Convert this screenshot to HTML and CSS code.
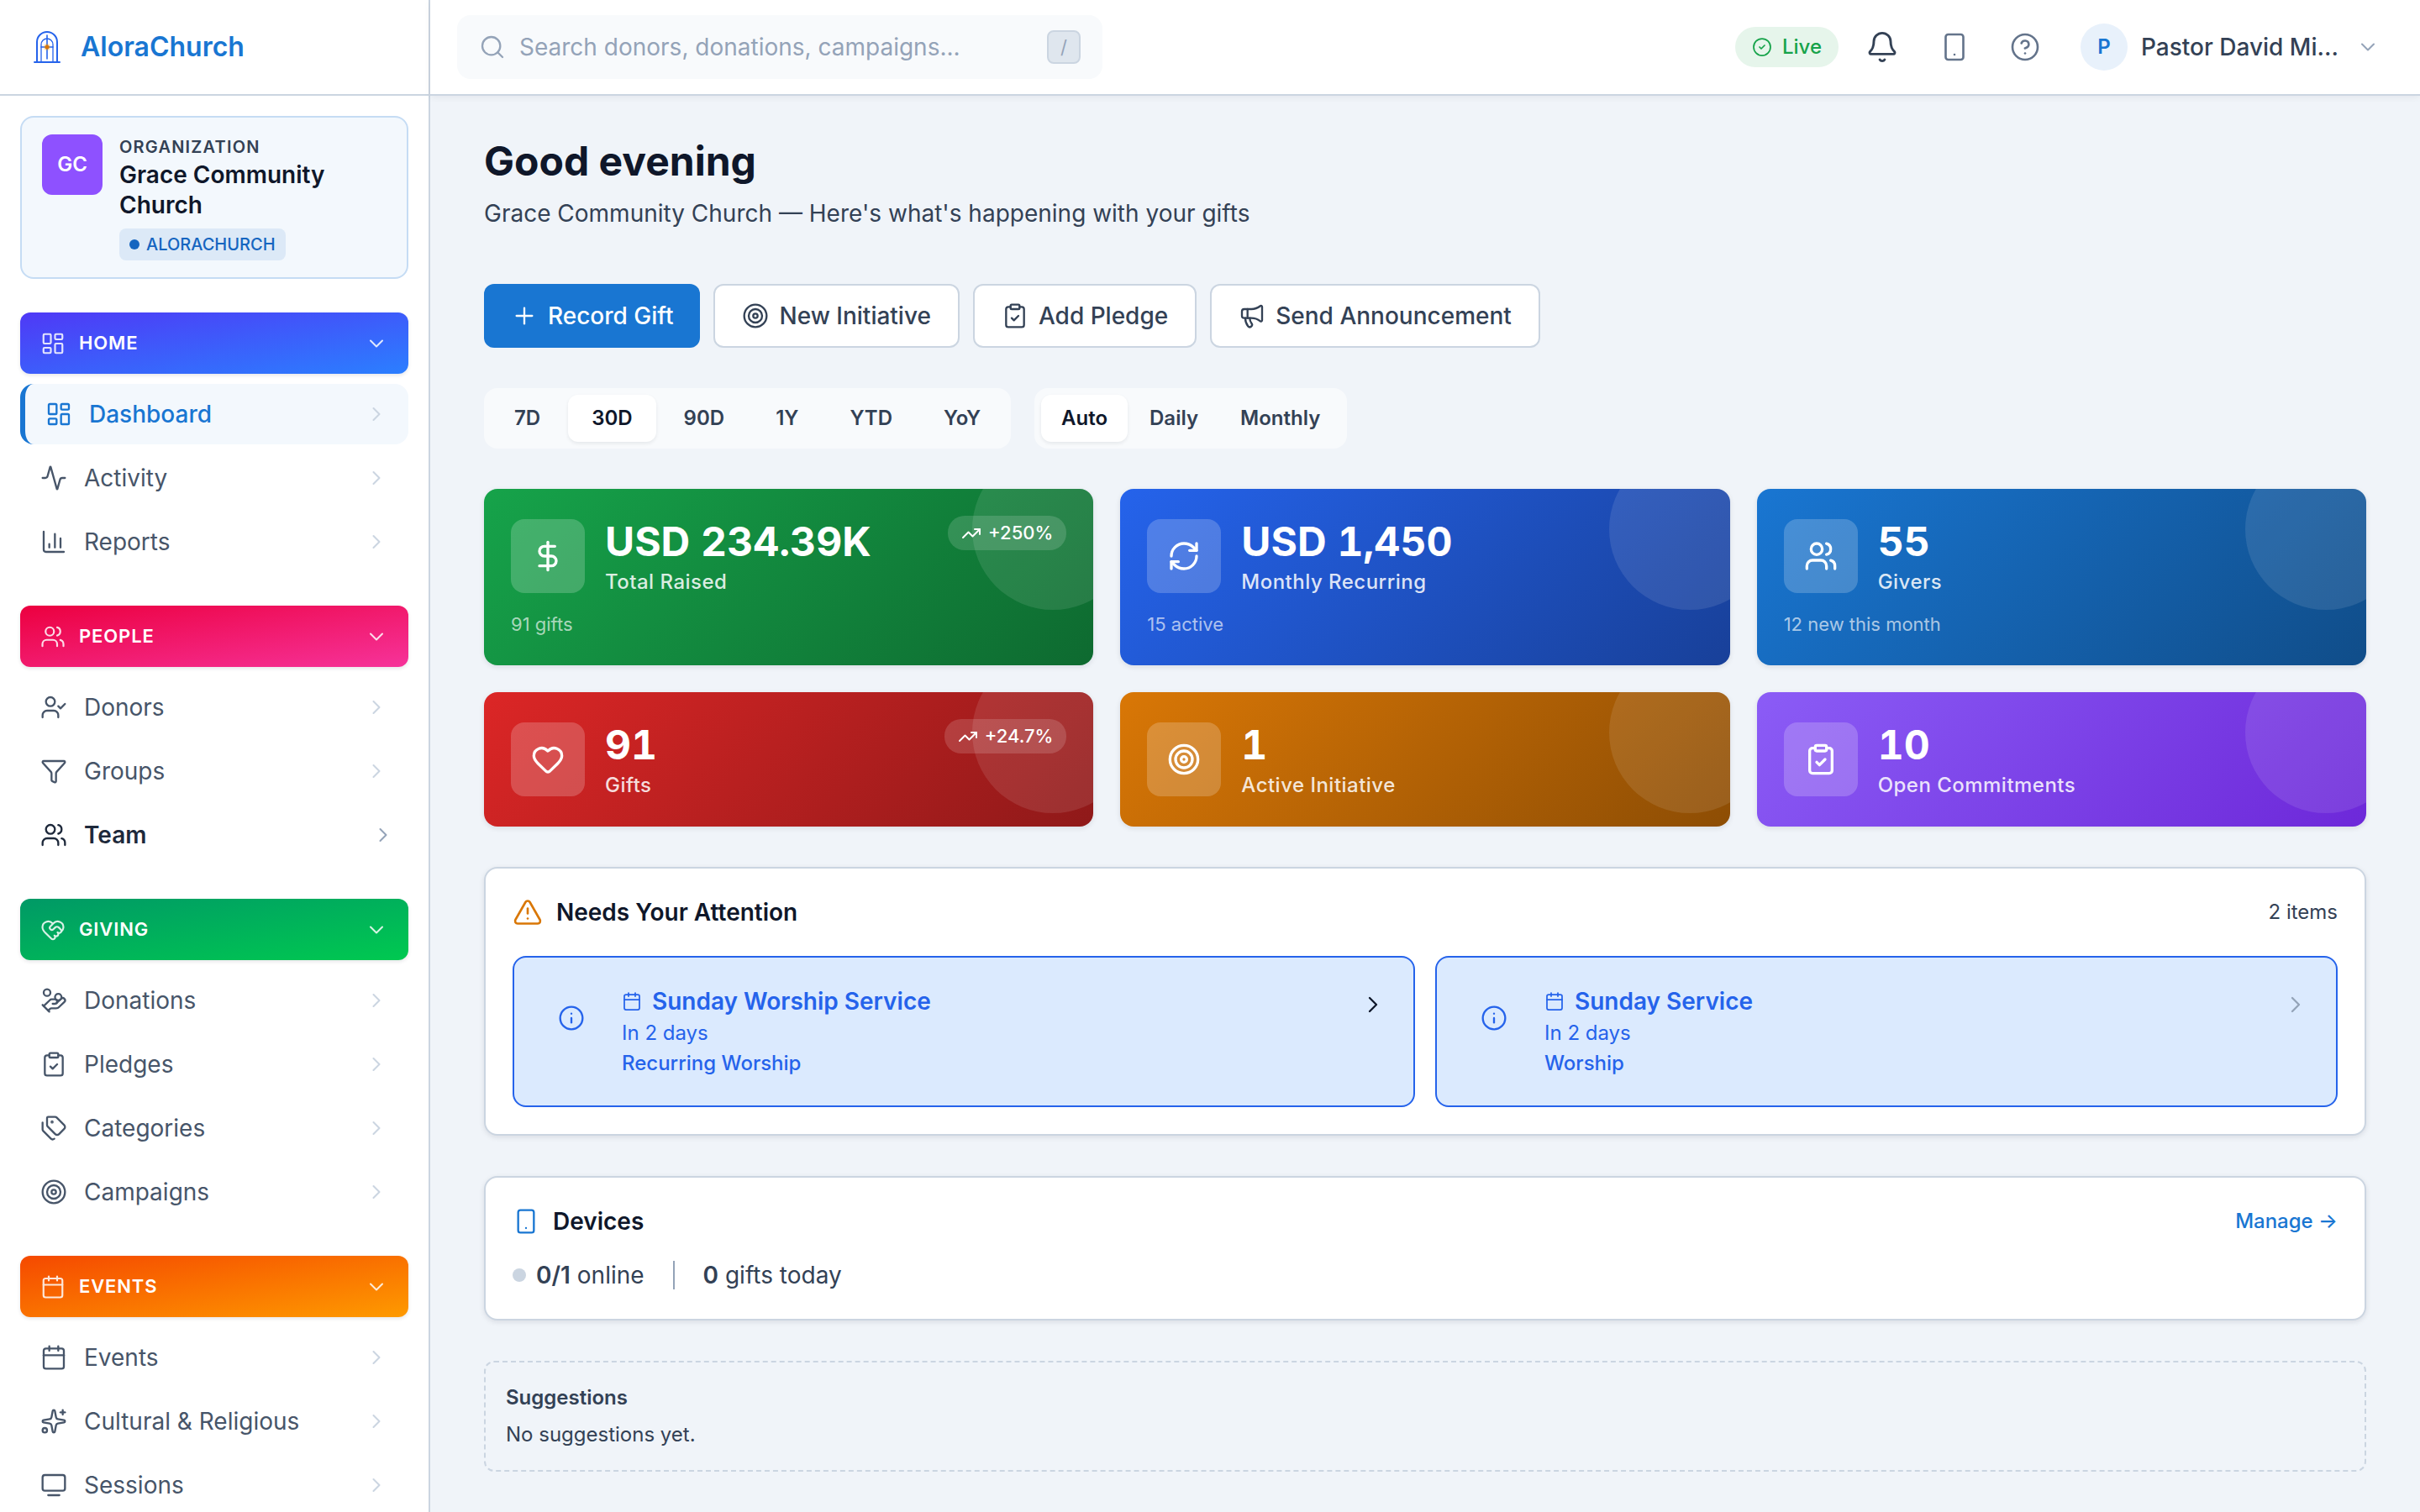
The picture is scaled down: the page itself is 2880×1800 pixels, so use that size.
FILE: index.html
```html
<!DOCTYPE html>
<html lang="en">
<head>
    <meta charset="UTF-8">
    <meta name="viewport" content="width=device-width, initial-scale=1.0">
    <title>AloraChurch</title>
    <link rel="stylesheet" href="styles.css">
</head>

<body>
<!-- icon sprite -->
<svg class="sprite" aria-hidden="true">
    <symbol id="i-dashboard" viewBox="0 0 24 24"><rect width="7" height="9" x="3" y="3" rx="1"/><rect width="7" height="5" x="14" y="3" rx="1"/><rect width="7" height="9" x="14" y="12" rx="1"/><rect width="7" height="5" x="3" y="16" rx="1"/></symbol>
    <symbol id="i-activity" viewBox="0 0 24 24"><path d="M22 12h-2.48a2 2 0 0 0-1.93 1.46l-2.35 8.36a.25.25 0 0 1-.48 0L9.24 2.18a.25.25 0 0 0-.48 0l-2.35 8.36A2 2 0 0 1 4.49 12H2"/></symbol>
    <symbol id="i-chart" viewBox="0 0 24 24"><path d="M3 3v16a2 2 0 0 0 2 2h16"/><path d="M18 17V9"/><path d="M13 17V5"/><path d="M8 17v-3"/></symbol>
    <symbol id="i-users" viewBox="0 0 24 24"><path d="M16 21v-2a4 4 0 0 0-4-4H6a4 4 0 0 0-4 4v2"/><path d="M16 3.128a4 4 0 0 1 0 7.744"/><path d="M22 21v-2a4 4 0 0 0-3-3.87"/><circle cx="9" cy="7" r="4"/></symbol>
    <symbol id="i-user-check" viewBox="0 0 24 24"><path d="m16 11 2 2 4-4"/><path d="M16 21v-2a4 4 0 0 0-4-4H6a4 4 0 0 0-4 4v2"/><circle cx="9" cy="7" r="4"/></symbol>
    <symbol id="i-funnel" viewBox="0 0 24 24"><path d="M10 20a1 1 0 0 0 .553.895l2 1A1 1 0 0 0 14 21v-7a2 2 0 0 1 .517-1.341L21.74 4.67A1 1 0 0 0 21 3H3a1 1 0 0 0-.742 1.67l7.225 7.989A2 2 0 0 1 10 14z"/></symbol>
    <symbol id="i-handshake" viewBox="0 0 24 24"><path d="M19.414 14.414C21 12.828 22 11.5 22 9.5a5.5 5.5 0 0 0-9.591-3.676.6.6 0 0 1-.818.001A5.5 5.5 0 0 0 2 9.5c0 2.3 1.5 4 3 5.5l5.535 5.362a2 2 0 0 0 2.879.052 2.12 2.12 0 0 0-.004-3 2.124 2.124 0 1 0 3-3 2.124 2.124 0 0 0 3.004 0 2 2 0 0 0 0-2.828l-1.881-1.882a2.41 2.41 0 0 0-3.409 0l-1.71 1.71a2 2 0 0 1-2.828 0 2 2 0 0 1 0-2.828l2.823-2.762"/></symbol>
    <symbol id="i-coins" viewBox="0 0 24 24"><path d="M11 15h2a2 2 0 1 0 0-4h-3c-.6 0-1.1.2-1.4.6L3 17"/><path d="m7 21 1.6-1.4c.3-.4.8-.6 1.4-.6h4c1.1 0 2.1-.4 2.8-1.2l4.6-4.4a2 2 0 0 0-2.75-2.91l-4.2 3.9"/><path d="m2 16 6 6"/><circle cx="16" cy="9" r="2.9"/><circle cx="6" cy="5" r="3"/></symbol>
    <symbol id="i-clipboard" viewBox="0 0 24 24"><rect width="8" height="4" x="8" y="2" rx="1"/><path d="M16 4h2a2 2 0 0 1 2 2v14a2 2 0 0 1-2 2H6a2 2 0 0 1-2-2V6a2 2 0 0 1 2-2h2"/><path d="m9 14 2 2 4-4"/></symbol>
    <symbol id="i-tags" viewBox="0 0 24 24"><path d="M13.172 2a2 2 0 0 1 1.414.586l6.71 6.71a2.4 2.4 0 0 1 0 3.408l-4.592 4.592a2.4 2.4 0 0 1-3.408 0l-6.71-6.71A2 2 0 0 1 6 9.172V3a1 1 0 0 1 1-1z"/><path d="M2 7v6.172a2 2 0 0 0 .586 1.414l6.71 6.71a2.4 2.4 0 0 0 3.191.193"/><circle cx="10.5" cy="6.5" r=".5" fill="currentColor"/></symbol>
    <symbol id="i-target" viewBox="0 0 24 24"><circle cx="12" cy="12" r="10"/><circle cx="12" cy="12" r="6"/><circle cx="12" cy="12" r="2"/></symbol>
    <symbol id="i-calendar" viewBox="0 0 24 24"><path d="M8 2v4"/><path d="M16 2v4"/><rect width="18" height="18" x="3" y="4" rx="2"/><path d="M3 10h18"/></symbol>
    <symbol id="i-sparkles" viewBox="0 0 24 24"><path d="M11.017 2.814a1 1 0 0 1 1.966 0l1.051 5.558a2 2 0 0 0 1.594 1.594l5.558 1.051a1 1 0 0 1 0 1.966l-5.558 1.051a2 2 0 0 0-1.594 1.594l-1.051 5.558a1 1 0 0 1-1.966 0l-1.051-5.558a2 2 0 0 0-1.594-1.594l-5.558-1.051a1 1 0 0 1 0-1.966l5.558-1.051a2 2 0 0 0 1.594-1.594z"/><path d="M20 2v4"/><path d="M22 4h-4"/><circle cx="4" cy="20" r="2"/></symbol>
    <symbol id="i-screen" viewBox="0 0 24 24"><path d="M7 21h10"/><rect width="20" height="14" x="2" y="3" rx="2"/></symbol>
    <symbol id="i-down" viewBox="0 0 24 24"><path d="m6 9 6 6 6-6"/></symbol>
    <symbol id="i-right" viewBox="0 0 24 24"><path d="m9 18 6-6-6-6"/></symbol>
    <symbol id="i-search" viewBox="0 0 24 24"><path d="m21 21-4.34-4.34"/><circle cx="11" cy="11" r="8"/></symbol>
    <symbol id="i-check" viewBox="0 0 24 24"><circle cx="12" cy="12" r="10"/><path d="m9 12 2 2 4-4"/></symbol>
    <symbol id="i-bell" viewBox="0 0 24 24"><path d="M10.268 21a2 2 0 0 0 3.464 0"/><path d="M3.262 15.326A1 1 0 0 0 4 17h16a1 1 0 0 0 .74-1.673C19.41 13.956 18 12.499 18 8A6 6 0 0 0 6 8c0 4.499-1.411 5.956-2.738 7.326"/></symbol>
    <symbol id="i-phone" viewBox="0 0 24 24"><rect width="14" height="20" x="5" y="2" rx="2"/><path d="M12 18h.01"/></symbol>
    <symbol id="i-help" viewBox="0 0 24 24"><circle cx="12" cy="12" r="10"/><path d="M9.09 9a3 3 0 0 1 5.83 1c0 2-3 3-3 3"/><path d="M12 17h.01"/></symbol>
    <symbol id="i-plus" viewBox="0 0 24 24"><path d="M5 12h14"/><path d="M12 5v14"/></symbol>
    <symbol id="i-megaphone" viewBox="0 0 24 24"><path d="M11 6a13 13 0 0 0 8.4-2.8A1 1 0 0 1 21 4v12a1 1 0 0 1-1.6.8A13 13 0 0 0 11 14H5a2 2 0 0 1-2-2V8a2 2 0 0 1 2-2z"/><path d="M6 14a12 12 0 0 0 2.4 7.2 2 2 0 0 0 3.2-2.4A8 8 0 0 1 10 14"/><path d="M8 6v8"/></symbol>
    <symbol id="i-dollar" viewBox="0 0 24 24"><path d="M12 2v20"/><path d="M17 5H9.5a3.5 3.5 0 0 0 0 7h5a3.5 3.5 0 0 1 0 7H6"/></symbol>
    <symbol id="i-refresh" viewBox="0 0 24 24"><path d="M3 12a9 9 0 0 1 9-9 9.75 9.75 0 0 1 6.74 2.74L21 8"/><path d="M21 3v5h-5"/><path d="M21 12a9 9 0 0 1-9 9 9.75 9.75 0 0 1-6.74-2.74L3 16"/><path d="M8 16H3v5"/></symbol>
    <symbol id="i-heart" viewBox="0 0 24 24"><path d="M2 9.5a5.5 5.5 0 0 1 9.591-3.676.56.56 0 0 0 .818 0A5.49 5.49 0 0 1 22 9.5c0 2.29-1.5 4-3 5.5l-5.492 5.313a2 2 0 0 1-3 .019L5 15c-1.5-1.5-3-3.2-3-5.5"/></symbol>
    <symbol id="i-trend" viewBox="0 0 24 24"><path d="M16 7h6v6"/><path d="m22 7-8.5 8.5-5-5L2 17"/></symbol>
    <symbol id="i-alert" viewBox="0 0 24 24"><path d="m21.73 18-8-14a2 2 0 0 0-3.48 0l-8 14A2 2 0 0 0 4 21h16a2 2 0 0 0 1.73-3"/><path d="M12 9v4"/><path d="M12 17h.01"/></symbol>
    <symbol id="i-info" viewBox="0 0 24 24"><circle cx="12" cy="12" r="10"/><path d="M12 16v-4"/><path d="M12 8h.01"/></symbol>
</svg>

<aside class="sidebar">
    <a class="brand" href="#">
        <svg class="brand-logo" viewBox="0 0 40 40" aria-hidden="true">
            <path d="M8 38V14a12 12 0 0 1 24 0v24" stroke-width="2"/>
            <path d="M13 38V17a7 7 0 0 1 14 0v21" stroke-width="1.3"/>
            <path d="M20 6v28M13 20h14" stroke-width="1.6"/>
            <path d="M5 38h30" stroke-width="2"/>
            <circle class="brand-glow" cx="20" cy="20" r="4"/>
            <circle class="brand-spark" cx="20" cy="20" r="2.5"/>
        </svg>
        <span>AloraChurch</span>
    </a>

    <div class="sidebar-body">
        <div class="org">
            <div class="org-avatar">GC</div>
            <div class="org-info">
                <div class="org-label">ORGANIZATION</div>
                <div class="org-name">Grace Community Church</div>
                <span class="org-badge"><i class="dot"></i>ALORACHURCH</span>
            </div>
        </div>

        <nav class="nav">
            <section class="nav-section">
                <button class="nav-head home" type="button"><svg class="icon"><use href="#i-dashboard"/></svg><span>HOME</span><svg class="icon chevron"><use href="#i-down"/></svg></button>
                <a class="nav-item active" href="#"><svg class="icon"><use href="#i-dashboard"/></svg><span>Dashboard</span><svg class="icon chevron"><use href="#i-right"/></svg></a>
                <a class="nav-item" href="#"><svg class="icon"><use href="#i-activity"/></svg><span>Activity</span><svg class="icon chevron"><use href="#i-right"/></svg></a>
                <a class="nav-item" href="#"><svg class="icon"><use href="#i-chart"/></svg><span>Reports</span><svg class="icon chevron"><use href="#i-right"/></svg></a>
            </section>
            <section class="nav-section">
                <button class="nav-head people" type="button"><svg class="icon"><use href="#i-users"/></svg><span>PEOPLE</span><svg class="icon chevron"><use href="#i-down"/></svg></button>
                <a class="nav-item" href="#"><svg class="icon"><use href="#i-user-check"/></svg><span>Donors</span><svg class="icon chevron"><use href="#i-right"/></svg></a>
                <a class="nav-item" href="#"><svg class="icon"><use href="#i-funnel"/></svg><span>Groups</span><svg class="icon chevron"><use href="#i-right"/></svg></a>
                <a class="nav-item hovered" href="#"><svg class="icon"><use href="#i-users"/></svg><span>Team</span><svg class="icon chevron"><use href="#i-right"/></svg></a>
            </section>
            <section class="nav-section">
                <button class="nav-head giving" type="button"><svg class="icon"><use href="#i-handshake"/></svg><span>GIVING</span><svg class="icon chevron"><use href="#i-down"/></svg></button>
                <a class="nav-item" href="#"><svg class="icon"><use href="#i-coins"/></svg><span>Donations</span><svg class="icon chevron"><use href="#i-right"/></svg></a>
                <a class="nav-item" href="#"><svg class="icon"><use href="#i-clipboard"/></svg><span>Pledges</span><svg class="icon chevron"><use href="#i-right"/></svg></a>
                <a class="nav-item" href="#"><svg class="icon"><use href="#i-tags"/></svg><span>Categories</span><svg class="icon chevron"><use href="#i-right"/></svg></a>
                <a class="nav-item" href="#"><svg class="icon"><use href="#i-target"/></svg><span>Campaigns</span><svg class="icon chevron"><use href="#i-right"/></svg></a>
            </section>
            <section class="nav-section">
                <button class="nav-head events" type="button"><svg class="icon"><use href="#i-calendar"/></svg><span>EVENTS</span><svg class="icon chevron"><use href="#i-down"/></svg></button>
                <a class="nav-item" href="#"><svg class="icon"><use href="#i-calendar"/></svg><span>Events</span><svg class="icon chevron"><use href="#i-right"/></svg></a>
                <a class="nav-item" href="#"><svg class="icon"><use href="#i-sparkles"/></svg><span>Cultural &amp; Religious</span><svg class="icon chevron"><use href="#i-right"/></svg></a>
                <a class="nav-item" href="#"><svg class="icon"><use href="#i-screen"/></svg><span>Sessions</span><svg class="icon chevron"><use href="#i-right"/></svg></a>
            </section>
        </nav>
    </div>
</aside>

<div class="page">
    <header class="topbar">
        <label class="search">
            <svg class="icon"><use href="#i-search"/></svg>
            <input type="text" placeholder="Search donors, donations, campaigns..." aria-label="Search">
            <kbd>/</kbd>
        </label>
        <div class="topbar-actions">
            <span class="live"><svg class="icon"><use href="#i-check"/></svg>Live</span>
            <button class="icon-button bell" type="button" aria-label="Notifications"><svg class="icon"><use href="#i-bell"/></svg></button>
            <button class="icon-button" type="button" aria-label="Devices"><svg class="icon"><use href="#i-phone"/></svg></button>
            <button class="icon-button" type="button" aria-label="Help"><svg class="icon"><use href="#i-help"/></svg></button>
            <button class="user" type="button">
                <span class="user-avatar">P</span>
                <span class="user-name">Pastor David Mi...</span>
                <svg class="icon"><use href="#i-down"/></svg>
            </button>
        </div>
    </header>

    <main class="content">
        <div class="greeting">
            <h1>Good evening</h1>
            <p>Grace Community Church — Here's what's happening with your gifts</p>
        </div>

        <div class="actions">
            <button class="button primary" type="button"><svg class="icon"><use href="#i-plus"/></svg>Record Gift</button>
            <button class="button" type="button"><svg class="icon"><use href="#i-target"/></svg>New Initiative</button>
            <button class="button" type="button"><svg class="icon"><use href="#i-clipboard"/></svg>Add Pledge</button>
            <button class="button" type="button"><svg class="icon"><use href="#i-megaphone"/></svg>Send Announcement</button>
        </div>

        <div class="filters">
            <div class="segment period">
                <button type="button">7D</button>
                <button class="selected" type="button">30D</button>
                <button type="button">90D</button>
                <button type="button">1Y</button>
                <button type="button">YTD</button>
                <button type="button">YoY</button>
            </div>
            <div class="segment">
                <button class="selected" type="button">Auto</button>
                <button type="button">Daily</button>
                <button type="button">Monthly</button>
            </div>
        </div>

        <div class="stats">
            <div class="stat green">
                <div class="stat-main">
                    <div class="stat-icon"><svg class="icon"><use href="#i-dollar"/></svg></div>
                    <div class="stat-text"><div class="stat-value">USD 234.39K</div><div class="stat-label">Total Raised</div></div>
                    <span class="trend"><svg class="icon"><use href="#i-trend"/></svg>+250%</span>
                </div>
                <div class="stat-note">91 gifts</div>
            </div>
            <div class="stat blue">
                <div class="stat-main">
                    <div class="stat-icon"><svg class="icon"><use href="#i-refresh"/></svg></div>
                    <div class="stat-text"><div class="stat-value">USD 1,450</div><div class="stat-label">Monthly Recurring</div></div>
                </div>
                <div class="stat-note">15 active</div>
            </div>
            <div class="stat azure">
                <div class="stat-main">
                    <div class="stat-icon"><svg class="icon"><use href="#i-users"/></svg></div>
                    <div class="stat-text"><div class="stat-value">55</div><div class="stat-label">Givers</div></div>
                </div>
                <div class="stat-note">12 new this month</div>
            </div>
            <div class="stat red">
                <div class="stat-main">
                    <div class="stat-icon"><svg class="icon"><use href="#i-heart"/></svg></div>
                    <div class="stat-text"><div class="stat-value">91</div><div class="stat-label">Gifts</div></div>
                    <span class="trend"><svg class="icon"><use href="#i-trend"/></svg>+24.7%</span>
                </div>
            </div>
            <div class="stat amber">
                <div class="stat-main">
                    <div class="stat-icon"><svg class="icon"><use href="#i-target"/></svg></div>
                    <div class="stat-text"><div class="stat-value">1</div><div class="stat-label">Active Initiative</div></div>
                </div>
            </div>
            <div class="stat purple">
                <div class="stat-main">
                    <div class="stat-icon"><svg class="icon"><use href="#i-clipboard"/></svg></div>
                    <div class="stat-text"><div class="stat-value">10</div><div class="stat-label">Open Commitments</div></div>
                </div>
            </div>
        </div>

        <section class="card attention">
            <div class="card-head">
                <svg class="icon"><use href="#i-alert"/></svg>
                <h2>Needs Your Attention</h2>
                <span class="count">2 items</span>
            </div>
            <div class="alerts">
                <a class="alert hovered" href="#">
                    <span class="alert-icon"><svg class="icon"><use href="#i-info"/></svg></span>
                    <span class="alert-text">
                        <span class="alert-title"><svg class="icon"><use href="#i-calendar"/></svg>Sunday Worship Service</span>
                        <span>In 2 days</span>
                        <span class="alert-type">Recurring Worship</span>
                    </span>
                    <svg class="icon chevron"><use href="#i-right"/></svg>
                </a>
                <a class="alert" href="#">
                    <span class="alert-icon"><svg class="icon"><use href="#i-info"/></svg></span>
                    <span class="alert-text">
                        <span class="alert-title"><svg class="icon"><use href="#i-calendar"/></svg>Sunday Service</span>
                        <span>In 2 days</span>
                        <span class="alert-type">Worship</span>
                    </span>
                    <svg class="icon chevron"><use href="#i-right"/></svg>
                </a>
            </div>
        </section>

        <section class="card devices">
            <div class="card-head">
                <svg class="icon"><use href="#i-phone"/></svg>
                <h2>Devices</h2>
                <a class="manage" href="#">Manage →</a>
            </div>
            <div class="device-row">
                <span class="online"><i class="dot"></i><span><b>0/1</b> online</span></span>
                <i class="divider"></i>
                <span><b>0</b> gifts today</span>
            </div>
        </section>

        <section class="suggestions">
            <h3>Suggestions</h3>
            <p>No suggestions yet.</p>
        </section>
    </main>
</div>
</body>
</html>
```
FILE: styles.css
```css
* {
    box-sizing: border-box;
}

body {
    margin: 0;
    display: flex;
    height: 100vh;
    overflow: hidden;
    background-color: #f0f4f9;
    color: #334155;
    font-family: Inter, "Liberation Sans", sans-serif;
    font-optical-sizing: none;
    font-size: 28px;
    line-height: 40px;
}

h1, h2, h3, p {
    margin: 0;
}

a {
    color: inherit;
    text-decoration: none;
}

button, input, kbd {
    font: inherit;
    color: inherit;
}

button {
    margin: 0;
    padding: 0;
    border: none;
    background: none;
    cursor: pointer;
}

b {
    font-weight: 600;
}

.sprite {
    display: none;
}

.icon {
    display: block;
    flex-shrink: 0;
    width: 32px;
    height: 32px;
    fill: none;
    stroke: currentColor;
    stroke-width: 1.75;
    stroke-linecap: round;
    stroke-linejoin: round;
}

.dot {
    display: block;
    flex-shrink: 0;
    width: 12px;
    height: 12px;
    border-radius: 50%;
    background-color: #1565c0;
}

/* Sidebar */
.sidebar {
    flex: 0 0 512px;
    border-right: 2px solid #cbd5e1;
    background-color: #fff;
    overflow: hidden;
}

.brand {
    display: flex;
    align-items: center;
    gap: 20px;
    height: 114px;
    padding: 0 36px;
    border-bottom: 2px solid #cbd5e1;
    color: #1976d2;
    font-size: 32px;
    font-weight: 600;
}

.brand-logo {
    width: 40px;
    height: 40px;
    fill: none;
    stroke: #2563eb;
    stroke-linecap: round;
}

.brand-glow {
    fill: #f59e0b;
    fill-opacity: 0.3;
    stroke: none;
}

.brand-spark {
    fill: #d97706;
    stroke: none;
}

.sidebar-body {
    padding: 24px;
}

.org {
    display: flex;
    gap: 20px;
    padding: 20px 24px;
    border: 2px solid #c5dcf4;
    border-radius: 16px;
    background-color: #f3f8fd;
}

.org-avatar {
    display: flex;
    align-items: center;
    justify-content: center;
    flex-shrink: 0;
    width: 72px;
    height: 72px;
    border-radius: 12px;
    background-color: #8e51ff;
    color: #fff;
    font-size: 24px;
    font-weight: 600;
}

.org-label {
    font-size: 20px;
    line-height: 30px;
    font-weight: 600;
    letter-spacing: 0.06em;
}

.org-name {
    color: #0f172a;
    line-height: 36px;
    font-weight: 600;
}

.org-badge {
    display: inline-flex;
    align-items: center;
    gap: 8px;
    margin-top: 10px;
    padding: 4px 12px;
    border-radius: 8px;
    background-color: #dce9f7;
    color: #1565c0;
    font-size: 20px;
    line-height: 30px;
    font-weight: 500;
    vertical-align: top;
}

.nav {
    display: flex;
    flex-direction: column;
    gap: 40px;
    margin-top: 40px;
}

.nav-section {
    display: flex;
    flex-direction: column;
    gap: 4px;
}

.nav-head {
    display: flex;
    align-items: center;
    gap: 16px;
    margin-bottom: 8px;
    padding: 20px 24px;
    border-radius: 12px;
    box-shadow: 0 2px 4px rgba(15, 23, 42, 0.1);
    color: #fff;
    font-size: 22px;
    line-height: 33px;
    font-weight: 600;
    letter-spacing: 0.04em;
}

.nav-head .icon {
    width: 30px;
    height: 30px;
    opacity: 0.85;
}

.home {
    background: linear-gradient(to bottom right, #4f39f6, #2b7fff);
}

.people {
    background: linear-gradient(to bottom right, #ec003f, #f6339a);
}

.giving {
    background: linear-gradient(to bottom right, #009966, #00c950);
}

.events {
    background: linear-gradient(to bottom right, #f54900, #fe9a00);
}

.nav-item {
    display: flex;
    align-items: center;
    gap: 20px;
    height: 72px;
    padding: 0 24px;
    border-radius: 16px;
    color: #475569;
}

.nav-head .chevron,
.nav-item .chevron {
    width: 28px;
    height: 28px;
    margin-left: auto;
}

.nav-item .chevron {
    color: #cbd5e1;
}

.nav-item.active {
    border-left: 6px solid #1976d2;
    background-color: #f3f8fd;
    color: #1976d2;
    font-weight: 500;
}

.nav-item.hovered {
    padding-right: 16px;
    color: #1e293b;
    font-weight: 600;
}

.nav-item.hovered .chevron {
    color: #94a3b8;
}

/* Top bar */
.page {
    flex: 1;
    min-width: 0;
}

.topbar {
    display: flex;
    align-items: center;
    justify-content: space-between;
    height: 114px;
    padding: 0 32px;
    border-bottom: 2px solid #cbd5e1;
    background-color: #fff;
    box-shadow: 0 2px 8px rgba(15, 23, 42, 0.06);
}

.search {
    display: flex;
    align-items: center;
    gap: 16px;
    width: 768px;
    height: 76px;
    padding: 0 26px;
    border-radius: 16px;
    background-color: #f8fafc;
    color: #94a3b8;
}

.search input {
    flex: 1;
    min-width: 0;
    padding: 0;
    border: none;
    outline: none;
    background: none;
}

.search input::placeholder {
    color: #94a3b8;
    opacity: 1;
}

.search kbd {
    width: 40px;
    height: 40px;
    border: 2px solid #cbd5e1;
    border-radius: 8px;
    background-color: #dfe6ee;
    font-size: 22px;
    line-height: 36px;
    text-align: center;
}

.topbar-actions {
    display: flex;
    align-items: center;
    gap: 16px;
}

.live {
    display: flex;
    align-items: center;
    gap: 12px;
    height: 48px;
    padding: 0 20px;
    border-radius: 24px;
    background-color: #e6f5eb;
    color: #16a34a;
    font-size: 24px;
    font-weight: 500;
}

.live .icon {
    width: 24px;
    height: 24px;
}

.icon-button {
    padding: 16px;
    color: #64748b;
}

.icon-button .icon {
    width: 36px;
    height: 36px;
}

.icon-button.bell {
    color: #334155;
}

.icon-button.bell .icon {
    width: 40px;
    height: 40px;
}

.user {
    display: flex;
    align-items: center;
    gap: 16px;
    padding: 0 16px;
    font-weight: 500;
}

.user-avatar {
    width: 56px;
    height: 56px;
    border-radius: 50%;
    background-color: #e8f1fb;
    color: #1976d2;
    font-size: 24px;
    line-height: 56px;
    font-weight: 600;
}

.user-name {
    width: 240px;
    overflow: hidden;
    text-align: left;
    white-space: nowrap;
}

.user .icon {
    width: 28px;
    height: 28px;
    color: #94a3b8;
}

/* Content */
.content {
    display: flex;
    flex-direction: column;
    gap: 48px;
    padding: 48px 64px;
}

.greeting {
    padding-bottom: 16px;
}

h1 {
    margin-bottom: 12px;
    color: #0f172a;
    font-size: 48px;
    line-height: 60px;
    font-weight: 700;
}

.actions {
    display: flex;
    gap: 16px;
}

.button {
    display: flex;
    align-items: center;
    gap: 12px;
    height: 76px;
    padding: 0 32px;
    border: 2px solid #cbd5e1;
    border-radius: 12px;
    background-color: #fff;
    font-weight: 500;
}

.button.primary {
    border: none;
    background-color: #1976d2;
    color: #fff;
}

.filters {
    display: flex;
    gap: 28px;
}

.segment {
    display: flex;
    gap: 2px;
    padding: 8px;
    border-radius: 16px;
    background-color: #f8fafc;
}

.segment button {
    height: 56px;
    padding: 0 24px;
    border-radius: 12px;
    font-size: 24px;
    font-weight: 600;
}

.segment.period {
    gap: 5px;
}

.segment.period button {
    padding: 0 28px;
}

.segment .selected {
    background-color: #fff;
    box-shadow: 0 2px 4px rgba(15, 23, 42, 0.08);
    color: #0f172a;
}

.stats {
    display: grid;
    grid-template-columns: repeat(3, 1fr);
    gap: 32px;
}

.stat {
    position: relative;
    padding: 32px;
    border-radius: 16px;
    box-shadow: 0 2px 6px rgba(15, 23, 42, 0.1);
    color: #fff;
    overflow: hidden;
}

/* corner circle */
.stat::before {
    content: "";
    position: absolute;
    top: -48px;
    right: -48px;
    width: 192px;
    height: 192px;
    border-radius: 50%;
    background-color: rgba(255, 255, 255, 0.1);
}

.green {
    background: linear-gradient(135deg, #16a34a, #0e6a30);
}

.blue {
    background: linear-gradient(135deg, #2563eb, #184099);
}

.azure {
    background: linear-gradient(135deg, #1976d2, #104d89);
}

.red {
    background: linear-gradient(135deg, #dc2626, #8f1919);
}

.amber {
    background: linear-gradient(135deg, #d97706, #8d4d04);
}

.purple {
    background: linear-gradient(135deg, #8b5cf6, #6d28d9);
}

.stat-main {
    position: relative;
    display: flex;
    align-items: center;
    gap: 24px;
}

.stat-icon {
    display: flex;
    align-items: center;
    justify-content: center;
    width: 88px;
    height: 88px;
    border-radius: 16px;
    background-color: rgba(255, 255, 255, 0.2);
}

.stat-icon .icon {
    width: 40px;
    height: 40px;
    stroke-width: 2;
}

.stat-value {
    font-size: 48px;
    line-height: 62px;
    font-weight: 700;
    font-variant-numeric: tabular-nums;
}

.stat-label {
    color: rgba(255, 255, 255, 0.85);
    font-size: 24px;
    line-height: 34px;
    font-weight: 500;
    letter-spacing: 0.02em;
}

.trend {
    display: flex;
    align-items: center;
    align-self: flex-start;
    gap: 8px;
    margin-left: auto;
    padding: 4px 16px;
    border-radius: 20px;
    background-color: rgba(255, 255, 255, 0.15);
    font-size: 22px;
    line-height: 33px;
    font-weight: 500;
}

.trend .icon {
    width: 24px;
    height: 24px;
    stroke-width: 2;
}

.stat-note {
    position: relative;
    margin-top: 16px;
    color: rgba(255, 255, 255, 0.65);
    font-size: 22px;
    line-height: 34px;
}

.card {
    padding: 32px;
    border: 2px solid #cbd5e1;
    border-radius: 16px;
    background-color: #fff;
    box-shadow: 0 2px 6px rgba(15, 23, 42, 0.1);
}

.card-head {
    display: flex;
    align-items: center;
    gap: 16px;
}

h2 {
    color: #0f172a;
    font-size: 28px;
    line-height: 40px;
    font-weight: 600;
}

.attention .card-head .icon {
    width: 36px;
    height: 36px;
    color: #d97706;
}

.devices .card-head .icon {
    color: #1976d2;
}

.count,
.manage {
    margin-left: auto;
    font-size: 24px;
}

.manage {
    color: #1976d2;
    font-weight: 500;
}

.alerts {
    display: grid;
    grid-template-columns: 1fr 1fr;
    gap: 24px;
    margin-top: 32px;
}

.alert {
    display: flex;
    gap: 20px;
    padding: 32px 32px 32px 28px;
    border: 2px solid #2563eb;
    border-radius: 16px;
    background-color: #dbeafe;
    color: #2563eb;
    font-size: 24px;
    line-height: 36px;
}

.alert-icon {
    display: flex;
    align-items: center;
    justify-content: center;
    width: 80px;
    height: 80px;
}

.alert-text {
    display: flex;
    flex-direction: column;
}

.alert-title {
    display: flex;
    align-items: center;
    gap: 12px;
    font-size: 28px;
    line-height: 40px;
    font-weight: 600;
}

.alert-title .icon {
    width: 24px;
    height: 24px;
}

.alert-type {
    font-weight: 500;
}

.alert .chevron {
    margin: 8px 0 0 auto;
    color: #94a3b8;
}

.alert.hovered .chevron {
    color: #0f172a;
}

.device-row {
    display: flex;
    align-items: center;
    gap: 34px;
    margin-top: 24px;
}

.online {
    display: flex;
    align-items: center;
    gap: 12px;
}

.online .dot {
    width: 16px;
    height: 16px;
    background-color: #cbd5e1;
}

.divider {
    width: 2px;
    height: 34px;
    background-color: #94a3b8;
}

.suggestions {
    padding: 24px;
    border: 2px dashed #cbd5e1;
    border-radius: 12px;
    font-size: 24px;
    line-height: 36px;
}

h3 {
    margin-bottom: 8px;
    font-size: 24px;
    font-weight: 600;
}
```
